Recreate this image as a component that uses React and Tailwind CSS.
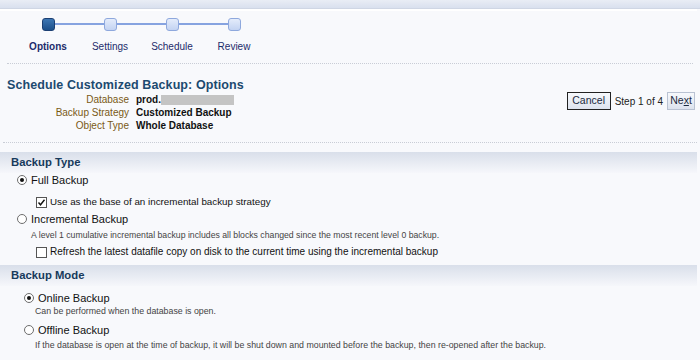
const steps = ["Options", "Settings", "Schedule", "Review"];

function Train() {
  return (
    <div className="flex pl-[17px] pt-[1px]">
      {steps.map((s, i) => (
        <div key={s} className="w-[62px] flex flex-col items-center">
          <div className="flex items-center w-full h-[24px]">
            <div className={`flex-1 h-[2px] ${i === 0 ? "" : "bg-[#86a3e0]"}`} />
            {i === 0 ? (
              <div className="w-[13px] h-[13px] rounded-[3px] border border-[#1b3f73] bg-gradient-to-b from-[#3d77b4] to-[#1c4f8a]" />
            ) : (
              <div className="w-[13px] h-[13px] rounded-[3px] border border-[#8ea8dd] bg-gradient-to-b from-[#e4ecfb] to-[#c3d3f2]" />
            )}
            <div className={`flex-1 h-[2px] ${i === 3 ? "" : "bg-[#86a3e0]"}`} />
          </div>
          <div className={`mt-[4px] text-[10px] leading-[14px] text-[#1d2c6b] ${i === 0 ? "font-bold" : ""}`}>{s}</div>
        </div>
      ))}
    </div>
  );
}

function Radio({ checked }) {
  return (
    <span className="inline-flex items-center justify-center w-[10px] h-[10px] rounded-full border border-[#6d6d6d] bg-white shrink-0">
      {checked && <span className="w-[4px] h-[4px] rounded-full bg-[#111]" />}
    </span>
  );
}

function Check({ checked }) {
  return (
    <span className="inline-flex items-center justify-center w-[11px] h-[11px] border border-[#555] bg-white shrink-0">
      {checked && (
        <svg width="9" height="9" viewBox="0 0 9 9">
          <path d="M1.5 4.5 L3.5 6.8 L7.5 1.8" fill="none" stroke="#111" strokeWidth="1.4" />
        </svg>
      )}
    </span>
  );
}

function Band({ children }) {
  return (
    <div className="h-[21px] flex items-center pl-[11px] bg-gradient-to-b from-[#d9dfea] to-[#f6f7fb] text-[11.3px] font-bold text-[#173a5c]">
      {children}
    </div>
  );
}

export default function App() {
  return (
    <div className="w-[700px] h-[360px] overflow-hidden bg-[#f8f9fc] font-['Liberation_Sans',Arial,sans-serif] text-[#111]">
      <div className="h-[9px] bg-gradient-to-b from-[#e9edf5] to-[#d9e0ee] border-b border-[#cfd6e4]" />
      <div className="h-[2px] bg-white mr-[3px]" />
      <Train />
      <div className="mt-[9px] mx-[7px] border-t border-dotted border-[#c9cdd6]" />

      <div className="flex items-start pl-[7px] pr-[5px] pt-[13px]">
        <div className="flex-1">
          <div className="text-[12.5px] leading-[16px] font-bold text-[#1c4a70] tracking-[0.1px]">
            Schedule Customized Backup: Options
          </div>
          <div className="grid grid-cols-[122px_1fr] gap-x-[7px] text-[10px] leading-[13px]">
            <div className="text-right text-[#7a5a16]">Database</div>
            <div className="flex items-center font-bold">
              prod.<span className="inline-block w-[73px] h-[10px] bg-[#c4c4c4]" />
            </div>
            <div className="text-right text-[#7a5a16]">Backup Strategy</div>
            <div className="font-bold">Customized Backup</div>
            <div className="text-right text-[#7a5a16]">Object Type</div>
            <div className="font-bold">Whole Database</div>
          </div>
        </div>
        <div className="flex items-center gap-[4px] mt-[15px] text-[10px]">
          <button className="h-[18px] w-[44px] border border-[#222] bg-gradient-to-b from-[#f7f9fc] to-[#dde3ee] text-[#1a2a40] text-[10.5px]">
            Cancel
          </button>
          <span className="text-[#222]">Step 1 of 4</span>
          <button className="h-[18px] w-[28px] border border-[#b9c2d2] bg-gradient-to-b from-[#f7f9fc] to-[#dde3ee] text-[#1a2a40] text-[10.5px]">
            Ne<span className="underline">x</span>t
          </button>
        </div>
      </div>
      <div className="mt-[10px] mx-[3px] border-t border-dotted border-[#c9cdd6]" />

      <div className="mt-[9px] mr-[3px]">
        <Band>Backup Type</Band>
      </div>
      <div className="pl-[17px] text-[11px] leading-[14px]">
        <div className="flex items-center gap-[4px] mt-0">
          <Radio checked />
          <span>Full Backup</span>
        </div>
        <div className="flex items-center gap-[3px] ml-[19px] mt-[8px] text-[9.8px]">
          <Check checked />
          <span>Use as the base of an incremental backup strategy</span>
        </div>
        <div className="flex items-center gap-[4px] mt-[3px]">
          <Radio />
          <span>Incremental Backup</span>
        </div>
        <div className="ml-[14px] mt-[4px] text-[8.7px] leading-[11px] text-[#444]">
          A level 1 cumulative incremental backup includes all blocks changed since the most recent level 0 backup.
        </div>
        <div className="flex items-center gap-[3px] ml-[19px] mt-[4px] text-[10px]">
          <Check />
          <span>Refresh the latest datafile copy on disk to the current time using the incremental backup</span>
        </div>
      </div>

      <div className="mt-[6px] mr-[3px]">
        <Band>Backup Mode</Band>
      </div>
      <div className="pl-[24px] text-[11px] leading-[14px]">
        <div className="flex items-center gap-[4px] mt-[5px]">
          <Radio checked />
          <span>Online Backup</span>
        </div>
        <div className="ml-[11px] mt-[1px] text-[8.8px] leading-[11px] text-[#444]">Can be performed when the database is open.</div>
        <div className="flex items-center gap-[4px] mt-[6px]">
          <Radio />
          <span>Offline Backup</span>
        </div>
        <div className="ml-[11px] mt-[3px] text-[8.8px] leading-[11px] text-[#444]">
          If the database is open at the time of backup, it will be shut down and mounted before the backup, then re-opened after the backup.
        </div>
      </div>
    </div>
  );
}
